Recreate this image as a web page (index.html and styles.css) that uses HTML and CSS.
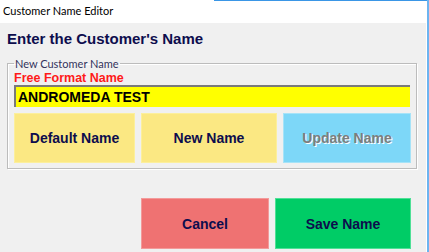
FILE: index.html
```html
<!DOCTYPE html>
<html lang="en">
<head>
  <meta charset="UTF-8">
  <title>Customer Name Editor</title>
  <link rel="stylesheet" href="styles.css">
</head>
<body>
  <div class="window">
    <div class="titlebar">Customer Name Editor</div>
    <div class="client">
      <h1 class="heading">Enter the Customer's Name</h1>
      <fieldset class="group">
        <legend class="group-legend">New Customer Name</legend>
        <div class="field-label">Free Format Name</div>
        <div class="name-input">ANDROMEDA TEST</div>
        <div class="btn-row">
          <button class="btn btn-yellow btn-default">Default Name</button>
          <button class="btn btn-yellow btn-new">New Name</button>
          <button class="btn btn-blue btn-update" disabled>Update Name</button>
        </div>
      </fieldset>
      <div class="actions">
        <button class="btn btn-red btn-cancel">Cancel</button>
        <button class="btn btn-green btn-save">Save Name</button>
      </div>
    </div>
  </div>
</body>
</html>
```

FILE: styles.css
```css
/* Customer Name Editor dialog */
:root {
  --navy: #0d0d4d;
  --client-bg: #f0f0f0;
  --frame-blue: #6cb4f0;
  --yellow-btn: #fbe883;
  --blue-btn: #7dd7f8;
  --red-btn: #ef7272;
  --green-btn: #00cc66;
}

body {
  margin: 0;
  background: #ffffff;
  font-family: "Liberation Sans", Arial, sans-serif;
  overflow: hidden;
}

.window {
  width: 427px;
  height: 252px;
  border-right: 2px solid var(--frame-blue);
  display: flex;
  flex-direction: column;
}

.titlebar {
  height: 23px;
  box-sizing: border-box;
  padding: 4px 0 0 3px;
  font-family: Lato, "Open Sans", sans-serif;
  font-size: 11px;
  line-height: 14px;
  color: #000000;
  background: linear-gradient(90deg, transparent 50%, #3a96e6 50%) top / 100% 1px no-repeat, #ffffff;
}

.client {
  flex: 1;
  width: 426px;
  background: var(--client-bg);
  padding-top: 7px;
  box-sizing: border-box;
}

.heading {
  margin: 0 0 0 7px;
  font-size: 15px;
  line-height: 17px;
  font-weight: bold;
  color: var(--navy);
}

.group {
  margin: 10px 0 0 7px;
  width: 410px;
  box-sizing: border-box;
  padding: 1px 5px 5px 6px;
  border: 1px solid #bcbcbc;
  box-shadow: inset 1px 1px 0 #ffffff, 1px 1px 0 #ffffff;
  min-inline-size: 0;
}

.group-legend {
  padding: 0 1px;
  margin-left: 0;
  font-family: Lato, "Open Sans", sans-serif;
  font-size: 11px;
  line-height: 13px;
  color: #33335c;
}

.field-label {
  font-size: 12.5px;
  line-height: 14px;
  font-weight: bold;
  color: #ff1a1a;
}

.name-input {
  width: 396px;
  height: 22px;
  box-sizing: border-box;
  background: #ffff00;
  border-top: 2px solid #7a7a7a;
  border-left: 2px solid #7a7a7a;
  padding-left: 2px;
  font-size: 14px;
  line-height: 20px;
  font-weight: bold;
  color: #000000;
}

.btn-row {
  display: flex;
  gap: 6px;
  margin-top: 6px;
}

.btn {
  height: 50px;
  box-sizing: border-box;
  font-family: "Liberation Sans", Arial, sans-serif;
  font-size: 14px;
  font-weight: bold;
  color: var(--navy);
  padding: 0;
  cursor: pointer;
}

.btn-yellow {
  background: var(--yellow-btn);
  border: 1px solid #fcef9c;
}

.btn-blue {
  background: var(--blue-btn);
  border: 1px solid #a6e3f8;
  color: #7d7d7d;
  text-shadow: 1px 1px 0 #ffffff;
  cursor: default;
}

.btn-red {
  background: var(--red-btn);
  border: 1px solid #f39a9a;
}

.btn-green {
  background: var(--green-btn);
  border: 1px solid #4ee096;
}

.btn-default { width: 121px; }
.btn-new { width: 136px; }
.btn-update { width: 128px; }

.actions {
  display: flex;
  justify-content: flex-end;
  gap: 6px;
  padding-right: 15px;
  margin-top: 29px;
}

.actions .btn {
  height: 51px;
}

.btn-cancel { width: 128px; }
.btn-save { width: 136px; }
```
